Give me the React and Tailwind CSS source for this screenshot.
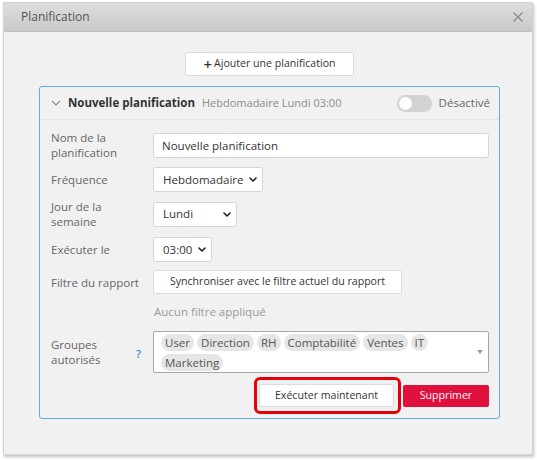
import { useState } from "react";

const font = { fontFamily: '"Open Sans", "Noto Sans", sans-serif' };

const Chevron = ({ className = "" }) => (
  <svg className={className} width="8" height="5" viewBox="0 0 8 5" fill="none">
    <path d="M1 1l3 3 3-3" stroke="#222" strokeWidth="1.6" strokeLinecap="round" strokeLinejoin="round" />
  </svg>
);

const SelectBox = ({ value, width }) => (
  <div className={`flex h-[25px] ${width} items-center justify-between rounded-[3px] border border-[#d6d6d6] bg-white pl-[9px] pr-[5px] text-[#333]`}>
    <span>{value}</span>
    <Chevron />
  </div>
);

const Row = ({ label, children, extra }) => (
  <div className="flex items-center">
    <div className="flex w-[102px] shrink-0 items-center justify-between pr-[12px] leading-[15px] text-[#666]">
      <span>{label}</span>
      {extra}
    </div>
    {children}
  </div>
);

const groups = ["User", "Direction", "RH", "Comptabilité", "Ventes", "IT", "Marketing"];

export default function App() {
  const [name, setName] = useState("Nouvelle planification");
  const [enabled, setEnabled] = useState(false);

  return (
    <div className="h-[460px] w-[537px] bg-white pl-[3px] pt-[2px]" style={font}>
      <div className="flex h-[453px] w-[530px] flex-col border border-[#d4d4d4] bg-[#f1f1f1] shadow-[1px_2px_3px_rgba(0,0,0,0.25)]">
        {/* dialog title bar */}
        <div className="flex h-[29px] shrink-0 items-center justify-between border-b border-[#c2c2c2] bg-gradient-to-b from-[#dedede] to-[#c9c9c9] pl-[17px] pr-[8px]">
          <span className="-mt-[1px] text-[12px] text-[#555]">Planification</span>
          <svg width="12" height="12" viewBox="0 0 12 12">
            <path d="M1.5 1.5l9 9M10.5 1.5l-9 9" stroke="#8a8a8a" strokeWidth="1.2" />
          </svg>
        </div>

        <div className="flex flex-col text-[11.5px]">
          <div className="flex justify-center pt-[20px] pl-[3px]">
            <button className="flex h-[24px] w-[169px] items-center justify-center gap-[2px] rounded-[2px] border border-[#dcdcdc] bg-white text-[10.6px] text-[#333]">
              <span className="text-[15px] font-semibold leading-none">+</span>
              <span>Ajouter une planification</span>
            </button>
          </div>

          {/* schedule card */}
          <div className="ml-[35px] mt-[10px] w-[461px] rounded-[3px] border border-[#5aaee0] bg-[#f1f1f1]">
            <div className="flex h-[33px] items-center border-b border-[#e2e2e2] pl-[11px] pr-[9px]">
              <svg width="10" height="6" viewBox="0 0 10 6" fill="none" className="mr-[7px]">
                <path d="M1 1l4 4 4-4" stroke="#888" strokeWidth="1.1" />
              </svg>
              <span className="font-bold text-[#333]">Nouvelle planification</span>
              <span className="ml-[7px] text-[11px] text-[#8c8c8c]">Hebdomadaire Lundi 03:00</span>
              <button
                onClick={() => setEnabled(!enabled)}
                className="ml-auto flex h-[17px] w-[35px] items-center rounded-full bg-[#d3d3d3] px-[2px]"
              >
                <span className={`h-[13px] w-[13px] rounded-full bg-white ${enabled ? "ml-auto" : ""}`} />
              </button>
              <span className="ml-[7px] text-[#666]">Désactivé</span>
            </div>

            <div className="flex flex-col pl-[11px] pr-[10px] pt-[10px] pb-[4px]">
              <Row label={<>Nom de la<br />planification</>}>
                <input
                  value={name}
                  onChange={(e) => setName(e.target.value)}
                  className="h-[25px] flex-1 rounded-[3px] border border-[#d6d6d6] bg-white px-[8px] text-[#333] outline-none"
                />
              </Row>
              <div className="mt-[7px]">
                <Row label="Fréquence">
                  <SelectBox value="Hebdomadaire" width="w-[110px]" />
                </Row>
              </div>
              <div className="mt-[7px]">
                <Row label={<>Jour de la<br />semaine</>}>
                  <SelectBox value="Lundi" width="w-[84px]" />
                </Row>
              </div>
              <div className="mt-[8px]">
                <Row label="Exécuter le">
                  <SelectBox value="03:00" width="w-[59px]" />
                </Row>
              </div>
              <div className="mt-[8px]">
                <Row label="Filtre du rapport">
                  <button className="h-[24px] w-[249px] rounded-[2px] border border-[#dcdcdc] bg-white text-[10.6px] text-[#333]">
                    Synchroniser avec le filtre actuel du rapport
                  </button>
                </Row>
              </div>
              <div className="mt-[10px] pl-[103px] leading-[16px] text-[#9a9a9a]">Aucun filtre appliqué</div>
              <div className="mt-[11px]">
                <Row
                  label={<>Groupes<br />autorisés</>}
                  extra={<span className="pt-[2px] text-[11px] font-semibold text-[#2a8bd0]">?</span>}
                >
                  <div className="relative flex h-[42px] flex-1 flex-wrap content-start gap-x-[3px] gap-y-[3px] rounded-[2px] border border-[#a8a8a8] bg-white pl-[7px] pr-[20px] pt-[2px]">
                    {groups.map((g) => (
                      <span key={g} className="h-[17px] rounded-full bg-[#e6e6e6] px-[4px] leading-[17px] text-[#555]">
                        {g}
                      </span>
                    ))}
                    <span className="absolute right-[5px] top-[18px] h-0 w-0 border-x-[3px] border-t-[4px] border-x-transparent border-t-[#999]" />
                  </div>
                </Row>
              </div>

              <div className="mt-[4px] flex items-center justify-end gap-[2px]">
                <div className="rounded-[6px] border-[3px] border-[#e5000c] py-[4px] pl-[2px] pr-[4px]">
                  <button className="h-[23px] w-[135px] rounded-[2px] border border-[#dcdcdc] bg-white text-[10.6px] text-[#333]">
                    Exécuter maintenant
                  </button>
                </div>
                <button className="h-[22px] w-[86px] rounded-[2px] bg-[#e0103d] text-[10.6px] text-white">Supprimer</button>
              </div>
            </div>
          </div>
        </div>
      </div>
    </div>
  );
}
